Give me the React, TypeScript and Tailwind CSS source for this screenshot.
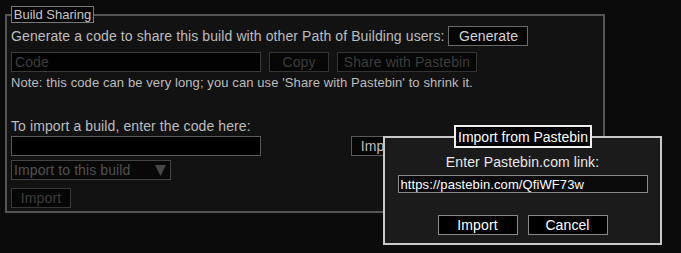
export default function App() {
  return (
    <div className="relative h-[253px] w-[681px] overflow-hidden bg-[#0b0b0b] pl-[5px] pt-[14px] font-['Liberation_Sans',Arial,sans-serif] text-[14px] leading-none tracking-[0.1px] text-[#bdbdbd]">
      {/* Build Sharing panel */}
      <div className="relative h-[199px] w-[600px] border-2 border-[#555555] bg-[#121212] pl-[4px]">
        <div className="absolute left-[4px] top-[-10px] flex h-[17px] w-[83px] items-center justify-center border border-[#7a7a7a] bg-[#050505] text-[13px] tracking-normal text-[#c8c8c8]">
          Build Sharing
        </div>

        <div className="mt-[10px] flex h-[20px] items-center">
          <span>Generate a code to share this build with other Path of Building users:</span>
          <button className="ml-[4px] flex h-[20px] w-[80px] items-center justify-center border border-[#6a6a6a] bg-[#050505] text-[#d4d4d4]">
            Generate
          </button>
        </div>

        <div className="mt-[6px] flex h-[20px] items-center gap-[8px]">
          <div className="flex h-[20px] w-[250px] items-center border border-[#3a3a3a] bg-[#020202] pl-[3px] text-[#3d3d3d]">
            Code
          </div>
          <div className="flex h-[20px] w-[60px] items-center justify-center border border-[#333333] bg-[#060606] text-[#3d3d3d]">
            Copy
          </div>
          <div className="flex h-[20px] w-[140px] items-center justify-center border border-[#333333] bg-[#060606] text-[#3d3d3d]">
            Share with Pastebin
          </div>
        </div>

        <div className="flex h-[20px] items-center text-[13px]">
          Note: this code can be very long; you can use 'Share with Pastebin' to shrink it.
        </div>

        <div className="mt-[24px] flex h-[20px] items-center">To import a build, enter the code here:</div>

        <div className="flex h-[20px] items-center">
          <div className="h-[20px] w-[250px] border border-[#5a5a5a] bg-black" />
          <button className="ml-[90px] flex h-[20px] w-[60px] items-center justify-center border border-[#5a5a5a] bg-[#060606] text-[#bdbdbd]">
            Import
          </button>
        </div>

        <div className="mt-[4px] flex h-[20px] w-[160px] items-center justify-between border border-[#444444] bg-[#080808] pl-[2px] pr-[4px] text-[#505050]">
          <span>Import to this build</span>
          <svg width="11" height="12" viewBox="0 0 11 12" className="text-[#474747]">
            <polygon points="0,1 11,1 5.5,12" fill="currentColor" />
          </svg>
        </div>

        <div className="mt-[8px] flex h-[20px] w-[60px] items-center justify-center border border-[#383838] bg-[#060606] text-[#3d3d3d]">
          Import
        </div>
      </div>

      {/* Import from Pastebin dialog */}
      <div className="absolute left-[383px] top-[136px] flex h-[109px] w-[279px] flex-col items-center border-2 border-[#c9c9c9] bg-[#1b1b1b] text-[#e8e8e8]">
        <div className="absolute left-[69px] top-[-13px] flex h-[23px] w-[138px] items-center justify-center border-2 border-[#f0f0f0] bg-black tracking-normal text-white">
          Import from Pastebin
        </div>
        <div className="mt-[14px] flex h-[20px] items-center">Enter Pastebin.com link:</div>
        <div className="mt-[3px] flex h-[18px] w-[250px] items-center border border-[#8a8a8a] bg-[#0a0a0a] pl-[2px] text-[13px] text-white">
          https://pastebin.com/QfiWF73w
        </div>
        <div className="mt-[22px] flex gap-[10px]">
          <button className="flex h-[20px] w-[80px] items-center justify-center border border-[#8a8a8a] bg-black text-white">
            Import
          </button>
          <button className="flex h-[20px] w-[80px] items-center justify-center border border-[#8a8a8a] bg-black text-white">
            Cancel
          </button>
        </div>
      </div>
    </div>
  );
}
